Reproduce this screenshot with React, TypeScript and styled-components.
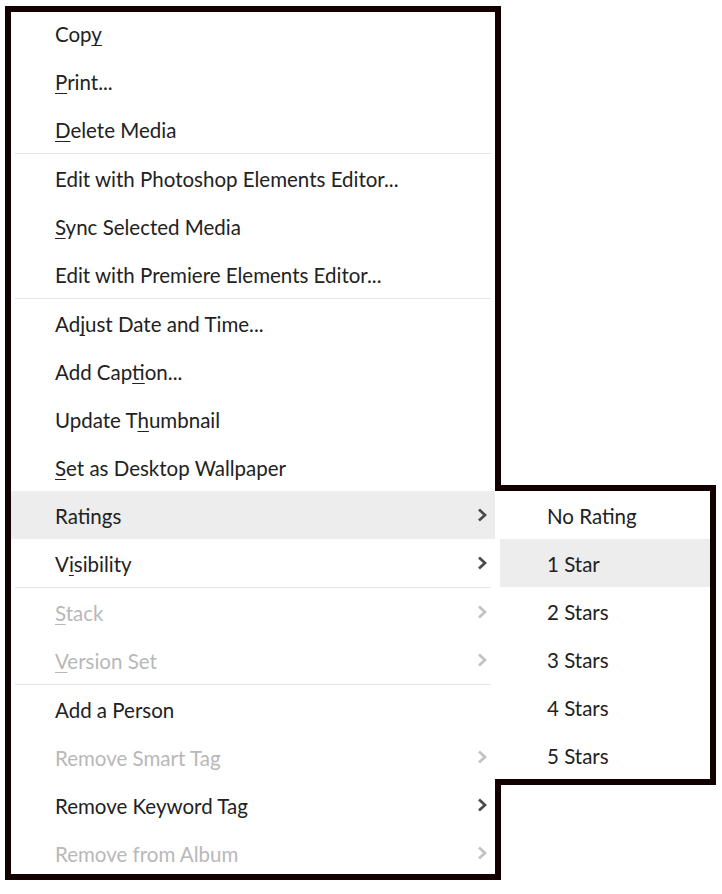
import React from "react";
import styled, { createGlobalStyle } from "styled-components";

const Global = createGlobalStyle`
  html, body { margin: 0; padding: 0; background: #ffffff; }
  body { font-family: "Lato", "Noto Sans", sans-serif; }
`;

const Stage = styled.div`
  position: relative;
  padding: 6px 0 0 5px;
  width: 722px;
  height: 894px;
  box-sizing: border-box;
`;

const MenuBox = styled.div`
  width: 496px;
  box-sizing: border-box;
  border: 6px solid #130101;
  background: #ffffff;
  overflow: hidden;
`;

const List = styled.div`
  display: flex;
  flex-direction: column;
  margin: -3px 0 -3px;
`;

const SubBox = styled.div`
  position: absolute;
  left: 495px;
  top: 485px;
  width: 221px;
  box-sizing: border-box;
  border: 6px solid #130101;
  border-left: none;
  background: #ffffff;
  padding-left: 5px;
  display: flex;
  flex-direction: column;
`;

const Row = styled.div<{ $hl?: boolean; $disabled?: boolean; $pad: number }>`
  height: 48px;
  display: flex;
  align-items: center;
  justify-content: space-between;
  padding: 3px 8px 0 ${(p) => p.$pad}px;
  box-sizing: border-box;
  background: ${(p) => (p.$hl ? "#ededed" : "transparent")};
  color: ${(p) => (p.$disabled ? "#b8b8b8" : "#222222")};
  font-size: 20.5px;
  white-space: nowrap;
`;

const Label = styled.span`
  line-height: 1;
`;

const Mn = styled.span`
  text-decoration: underline;
  text-decoration-thickness: 1px;
  text-underline-offset: 3px;
`;

const Separator = styled.div`
  height: 1px;
  margin: 0 4px;
  background: #e6e6e6;
`;

const Chevron = styled.svg<{ $disabled?: boolean }>`
  width: 10px;
  height: 16px;
  margin-top: -3px;
  color: ${(p) => (p.$disabled ? "#c2c2c2" : "#4a4a4a")};
`;

type Item =
  | { sep: true }
  | { text: string; mn?: number; sub?: boolean; disabled?: boolean; hl?: boolean };

const items: Item[] = [
  { text: "Copy", mn: 3 },
  { text: "Print...", mn: 0 },
  { text: "Delete Media", mn: 0 },
  { sep: true },
  { text: "Edit with Photoshop Elements Editor..." },
  { text: "Sync Selected Media", mn: 0 },
  { text: "Edit with Premiere Elements Editor..." },
  { sep: true },
  { text: "Adjust Date and Time...", mn: 2 },
  { text: "Add Caption...", mn: 7 },
  { text: "Update Thumbnail", mn: 8 },
  { text: "Set as Desktop Wallpaper", mn: 0 },
  { text: "Ratings", sub: true, hl: true },
  { text: "Visibility", sub: true, mn: 1 },
  { sep: true },
  { text: "Stack", sub: true, disabled: true, mn: 0 },
  { text: "Version Set", sub: true, disabled: true, mn: 0 },
  { sep: true },
  { text: "Add a Person" },
  { text: "Remove Smart Tag", sub: true, disabled: true },
  { text: "Remove Keyword Tag", sub: true },
  { text: "Remove from Album", sub: true, disabled: true },
];

const ratings = ["No Rating", "1 Star", "2 Stars", "3 Stars", "4 Stars", "5 Stars"];

function renderLabel(text: string, mn?: number) {
  if (mn === undefined) return <Label>{text}</Label>;
  return (
    <Label>
      {text.slice(0, mn)}
      <Mn>{text.charAt(mn)}</Mn>
      {text.slice(mn + 1)}
    </Label>
  );
}

function Arrow({ disabled }: { disabled?: boolean }) {
  return (
    <Chevron $disabled={disabled} viewBox="0 0 10 16">
      <polyline
        points="2,2.5 8,8 2,13.5"
        fill="none"
        stroke="currentColor"
        strokeWidth="2.7"
        strokeLinejoin="miter"
      />
    </Chevron>
  );
}

export default function App() {
  return (
    <>
      <Global />
      <Stage>
        <MenuBox>
          <List>
            {items.map((it, i) =>
              "sep" in it ? (
                <Separator key={i} />
              ) : (
                <Row key={i} $pad={44} $hl={it.hl} $disabled={it.disabled}>
                  {renderLabel(it.text, it.mn)}
                  {it.sub && <Arrow disabled={it.disabled} />}
                </Row>
              )
            )}
          </List>
        </MenuBox>
        <SubBox>
          {ratings.map((r, i) => (
            <Row key={r} $pad={47} $hl={i === 1}>
              <Label>{r}</Label>
            </Row>
          ))}
        </SubBox>
      </Stage>
    </>
  );
}
